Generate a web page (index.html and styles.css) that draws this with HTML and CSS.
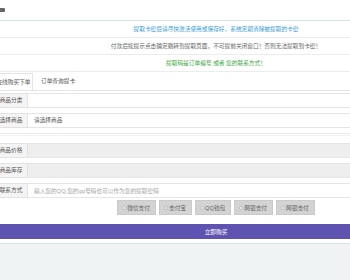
FILE: index.html
```html
<!Doctype html>
<html lang="zh-CN">
<head>
    <meta charset="UTF-8">
    <meta name="viewport" content="width=device-width, initial-scale=1.0">
    <title>在线购买下单</title>
    <link rel="stylesheet" href="styles.css">
</head>
<body>
    <div class="topbar">
        <span class="topbar-mark"></span>
    </div>

    <div class="page">
        <div class="notice notice-blue">提取卡密后请尽快激活使用或保存好，系统定期清除被提取的卡密</div>
        <div class="notice notice-gray">付款后按提示点击确定跳转到提取页面，不可提前关闭窗口！否则无法提取到卡密！</div>
        <div class="notice notice-green">提取码是订单编号 或者 您的联系方式！</div>

        <div class="tabs">
            <span class="tab tab-active">在线购买下单</span>
            <span class="tab">订单查询提卡</span>
        </div>

        <form class="order-form">
            <div class="form-group">
                <label class="form-label">商品分类</label>
                <div class="form-control"></div>
            </div>
            <div class="form-group">
                <label class="form-label">选择商品</label>
                <div class="form-control">请选择商品</div>
            </div>
            <div class="form-spacer"></div>
            <div class="form-group">
                <label class="form-label">商品价格</label>
                <div class="form-control disabled"></div>
            </div>
            <div class="form-group">
                <label class="form-label">商品库存</label>
                <div class="form-control disabled"></div>
            </div>
            <div class="form-group">
                <label class="form-label">联系方式</label>
                <input class="form-control" type="text" placeholder="输入您的QQ,您的qq号码也可以作为您的提取密码">
            </div>

            <div class="pay-list">
                <label class="pay-item"><span class="radio"></span>微信支付</label>
                <label class="pay-item"><span class="radio"></span>支付宝</label>
                <label class="pay-item"><span class="radio"></span>QQ钱包</label>
                <label class="pay-item"><span class="radio"></span>网银支付</label>
                <label class="pay-item"><span class="radio"></span>网银支付</label>
            </div>

            <button type="button" class="buy-btn">立即购买</button>
        </form>
    </div>

    <div class="footer"></div>
</body>
</html>
```

FILE: styles.css
```css
:root {
    --blue-text: #3a9bd6;
    --gray-text: #666;
    --green-text: #3ea83e;
    --line-color: #ececec;
    --purple: #5f53b1;
}

* {
    margin: 0;
    padding: 0;
    box-sizing: border-box;
}

body {
    font-family: 'Liberation Sans', 'Noto Sans CJK SC', sans-serif;
    font-size: 5.7px;
    color: #555;
    background-color: #eff3f4;
    overflow: hidden;
}

.topbar {
    height: 21px;
    background-color: white;
    border-bottom: 1px solid #d3e4eb;
    padding-top: 8px;
}

.topbar-mark {
    display: block;
    width: 5px;
    height: 4px;
    background-color: #666;
    border-radius: 0 1px 1px 0;
}

.page {
    width: 444px;
    margin-left: -6px;
    background-color: white;
    padding-bottom: 4px;
}

.notice {
    height: 17px;
    line-height: 16px;
    text-align: center;
    border-bottom: 1px solid var(--line-color);
}

.notice-blue {
    color: var(--blue-text);
}

.notice-gray {
    color: var(--gray-text);
}

.notice-green {
    color: var(--green-text);
}

.tabs {
    display: flex;
    height: 19px;
    border-bottom: 1px solid #e4e4e4;
    padding-top: 1px;
}

.tab {
    line-height: 16px;
    padding: 0 8px;
    color: #555;
}

.tab-active {
    width: 39px;
    padding: 0;
    text-align: center;
    border: 1px solid #e4e4e4;
    border-bottom: none;
    background-color: white;
}

.order-form {
    padding-top: 2px;
}

.form-group {
    display: flex;
    height: 15px;
    margin-bottom: 5px;
}

.form-label {
    width: 34px;
    flex-shrink: 0;
    line-height: 13px;
    text-align: center;
    background-color: #f4f4f4;
    border: 1px solid #e2e2e2;
    color: #555;
}

.form-control {
    flex: 1;
    height: 15px;
    line-height: 13px;
    padding: 0 6px;
    border: 1px solid #e6e6e6;
    border-left: none;
    background-color: white;
    font-family: inherit;
    font-size: inherit;
    color: #555;
    outline: none;
}

.form-control::placeholder {
    color: #a5a5a5;
}

.form-control.disabled {
    background-color: #eeeeee;
}

.form-spacer {
    height: 3px;
    margin-bottom: 7px;
    border-top: 1px solid var(--line-color);
    border-bottom: 1px solid #f3f3f3;
}

.pay-list {
    display: flex;
    justify-content: center;
    gap: 3px;
    margin-top: -3px;
}

.pay-item {
    display: flex;
    align-items: center;
    height: 15px;
    padding: 0 5px 0 4px;
    background-color: #d3d3d3;
    border: 1px solid #cacaca;
    color: #666;
}

.radio {
    width: 4px;
    height: 4px;
    margin-right: 1px;
    border-radius: 50%;
    background-color: white;
    border: 1px solid #bbb;
}

.buy-btn {
    display: block;
    width: 100%;
    height: 15px;
    margin-top: 9px;
    border: none;
    background-color: var(--purple);
    color: white;
    font-family: inherit;
    font-size: inherit;
    cursor: pointer;
}

.footer {
    height: 40px;
    border-top: 1px solid #d9e6e8;
    background-color: #eff3f4;
}
```
